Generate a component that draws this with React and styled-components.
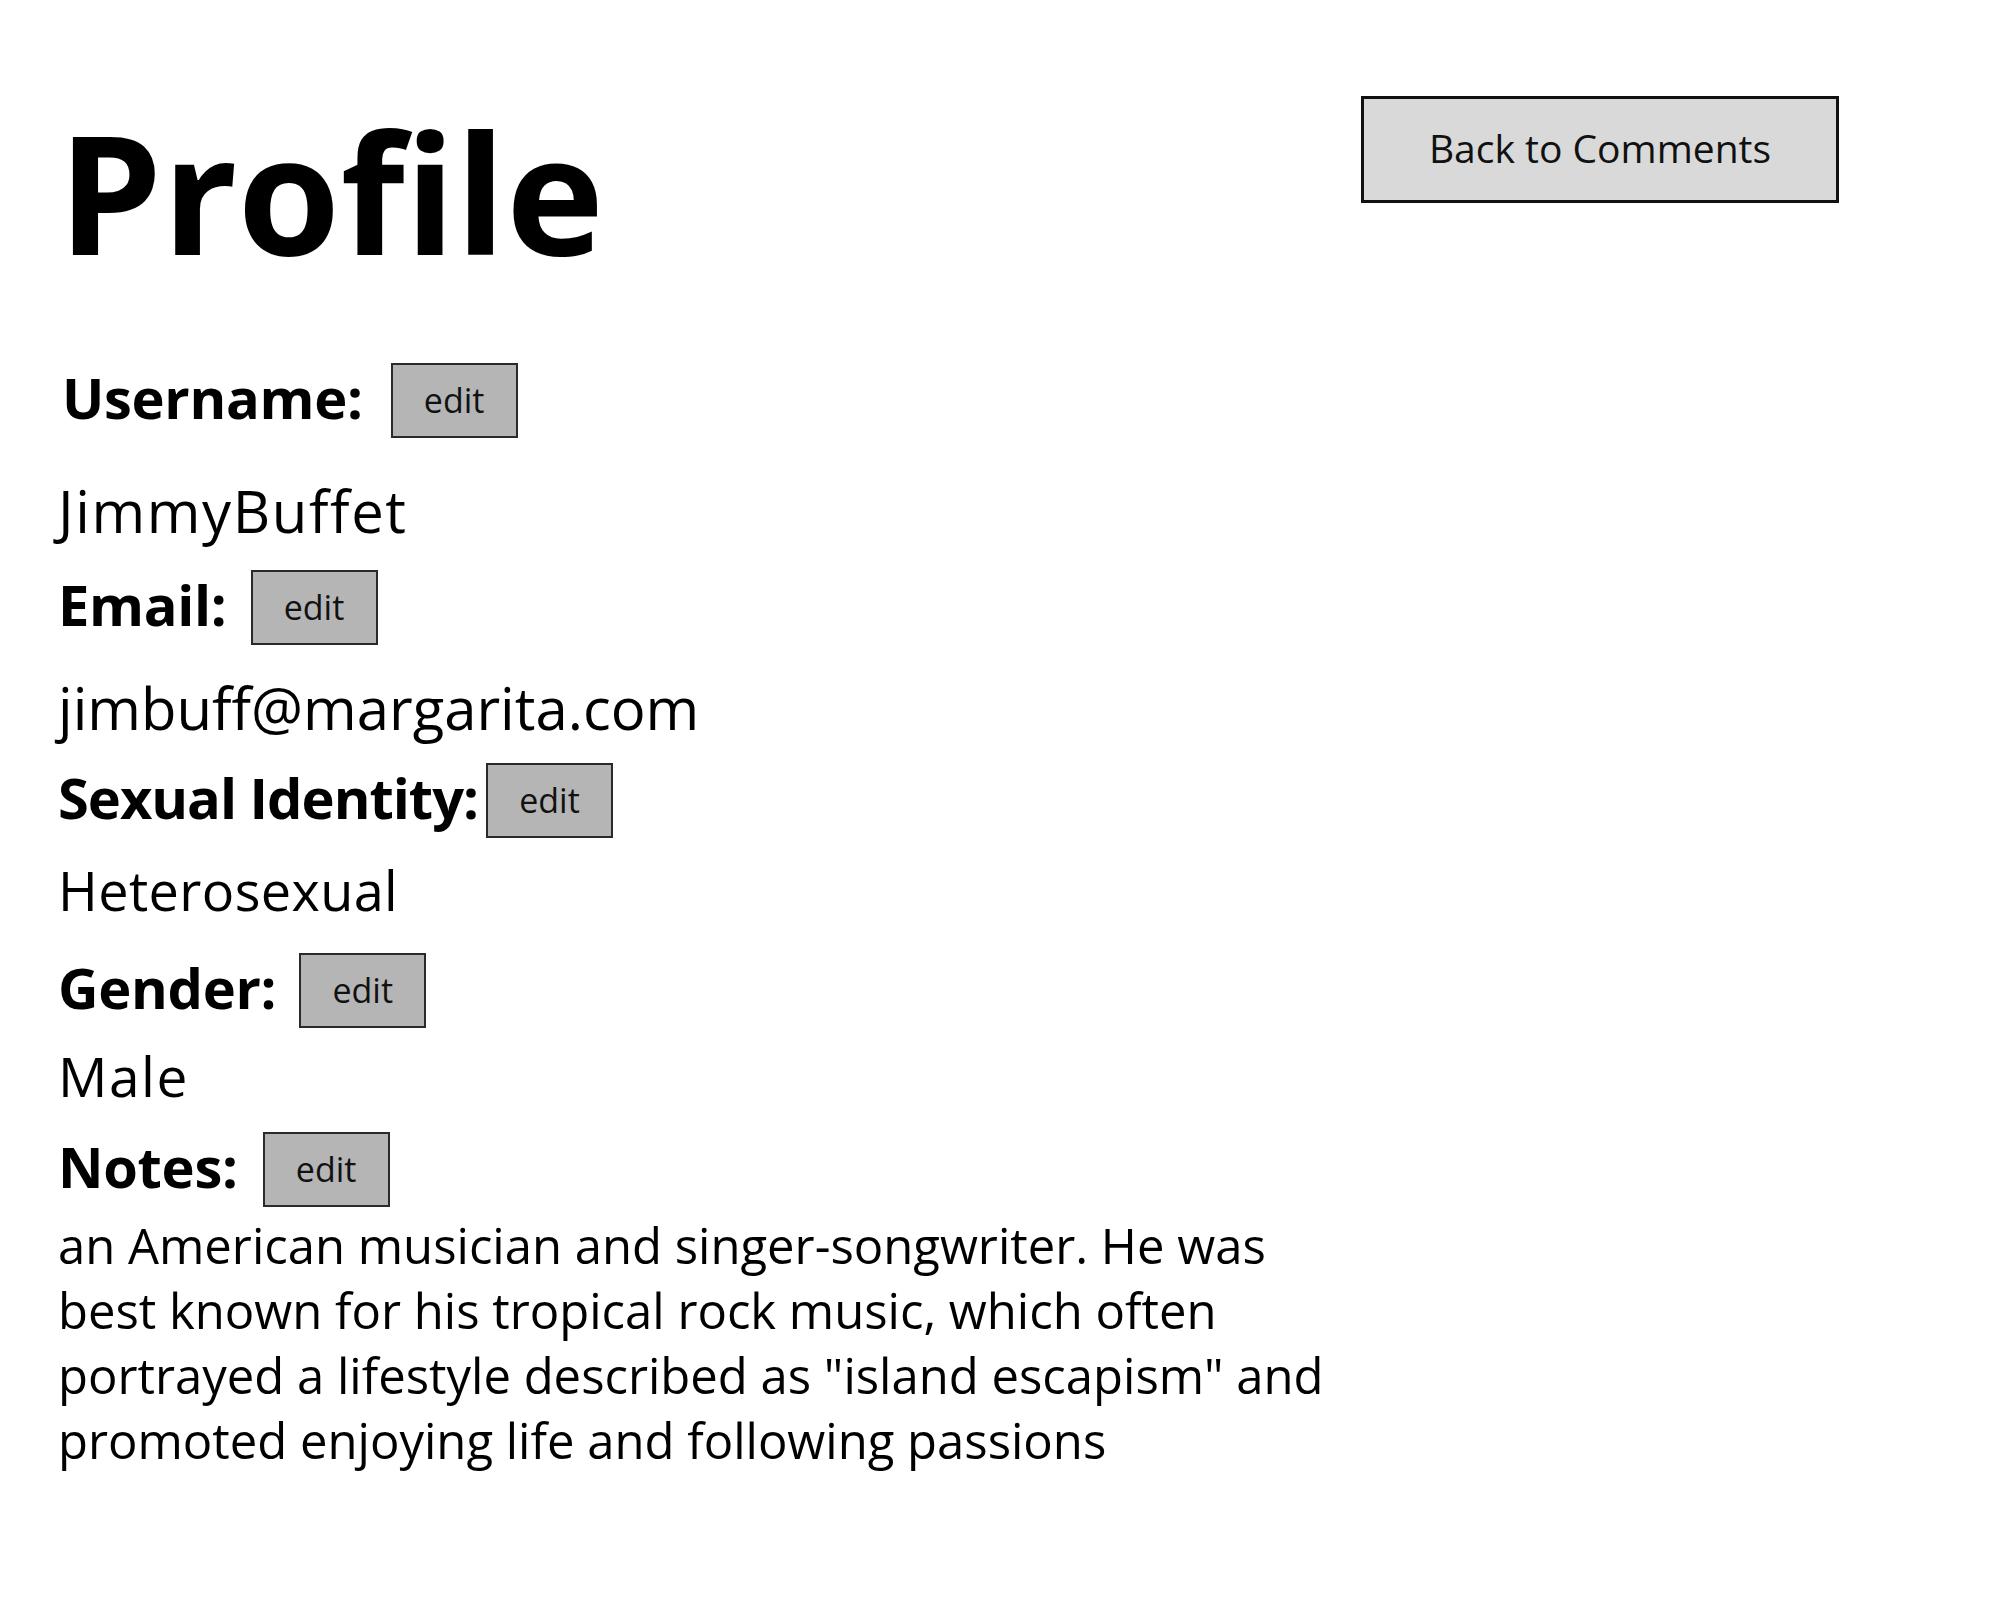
import React from "react";
import styled, { createGlobalStyle } from "styled-components";

const GlobalStyle = createGlobalStyle`
  html, body {
    margin: 0;
    padding: 0;
    background: #ffffff;
  }
  body {
    font-family: "Open Sans", "Noto Sans", sans-serif;
    color: #000000;
  }
`;

const Page = styled.main`
  box-sizing: border-box;
  min-height: 1600px;
  padding: 96px 161px 120px 58px;
`;

const Header = styled.header`
  display: flex;
  justify-content: space-between;
  align-items: flex-start;
  margin-bottom: 76px;
`;

const Title = styled.h1`
  margin: 0;
  font-size: 166px;
  line-height: 191px;
  font-weight: 700;
`;

const BackButton = styled.button`
  box-sizing: border-box;
  width: 478px;
  height: 107px;
  padding: 0 0 4px;
  background: #d9d9d9;
  border: 3px solid #111111;
  font-family: inherit;
  font-size: 39px;
  line-height: 1;
  color: #111111;
  cursor: pointer;
`;

const Fields = styled.section`
  display: flex;
  flex-direction: column;
`;

const LabelRow = styled.div`
  display: flex;
  align-items: center;
  height: 75px;
  padding-left: ${(p) => p.$indent || 0}px;
`;

const Label = styled.h2`
  margin: 0;
  padding-bottom: 8px;
  font-size: 56px;
  line-height: 1;
  font-weight: 700;
  letter-spacing: ${(p) => (p.$tracking ?? -0.3)}px;
  white-space: nowrap;
`;

const EditButton = styled.button`
  box-sizing: border-box;
  flex: none;
  width: 127px;
  height: 75px;
  margin-left: ${(p) => p.$gap}px;
  padding: 0 0 2px;
  background: #b5b5b5;
  border: 2px solid #2a2a2a;
  font-family: inherit;
  font-size: 34px;
  line-height: 1;
  color: #111111;
  cursor: pointer;
`;

const Value = styled.p`
  margin: ${(p) => p.$mt}px 0 ${(p) => p.$mb}px;
  font-size: ${(p) => p.$size}px;
  line-height: 70px;
  font-weight: 400;
  letter-spacing: ${(p) => p.$tracking || 0}px;
  white-space: nowrap;
`;

const Notes = styled.p`
  margin: 6px 0 0;
  max-width: 1300px;
  font-size: 49px;
  line-height: 65px;
  font-weight: 400;
`;

const fields = [
  { label: "Username:", value: "JimmyBuffet", indent: 4, gap: 28, size: 58, mt: 38, mb: 24, tracking: 1.6 },
  { label: "Email:", value: "jimbuff@margarita.com", gap: 24, size: 58, mt: 28, mb: 20, tracking: 0 },
  { label: "Sexual Identity:", labelTracking: -1, value: "Heterosexual", gap: 8, size: 54, mt: 17, mb: 28, tracking: 0.4 },
  { label: "Gender:", value: "Male", gap: 23, size: 55, mt: 13, mb: 21, tracking: 1.5 },
];

export default function App() {
  return (
    <>
      <GlobalStyle />
      <Page>
        <Header>
          <Title>Profile</Title>
          <BackButton type="button">Back to Comments</BackButton>
        </Header>
        <Fields>
          {fields.map((f) => (
            <React.Fragment key={f.label}>
              <LabelRow $indent={f.indent}>
                <Label $tracking={f.labelTracking}>{f.label}</Label>
                <EditButton type="button" $gap={f.gap}>
                  edit
                </EditButton>
              </LabelRow>
              <Value $size={f.size} $mt={f.mt} $mb={f.mb} $tracking={f.tracking}>
                {f.value}
              </Value>
            </React.Fragment>
          ))}
          <LabelRow>
            <Label>Notes:</Label>
            <EditButton type="button" $gap={25}>
              edit
            </EditButton>
          </LabelRow>
          <Notes>
            an American musician and singer-songwriter. He was best known for his
            tropical rock music, which often portrayed a lifestyle described as
            "island escapism" and promoted enjoying life and following passions
          </Notes>
        </Fields>
      </Page>
    </>
  );
}
